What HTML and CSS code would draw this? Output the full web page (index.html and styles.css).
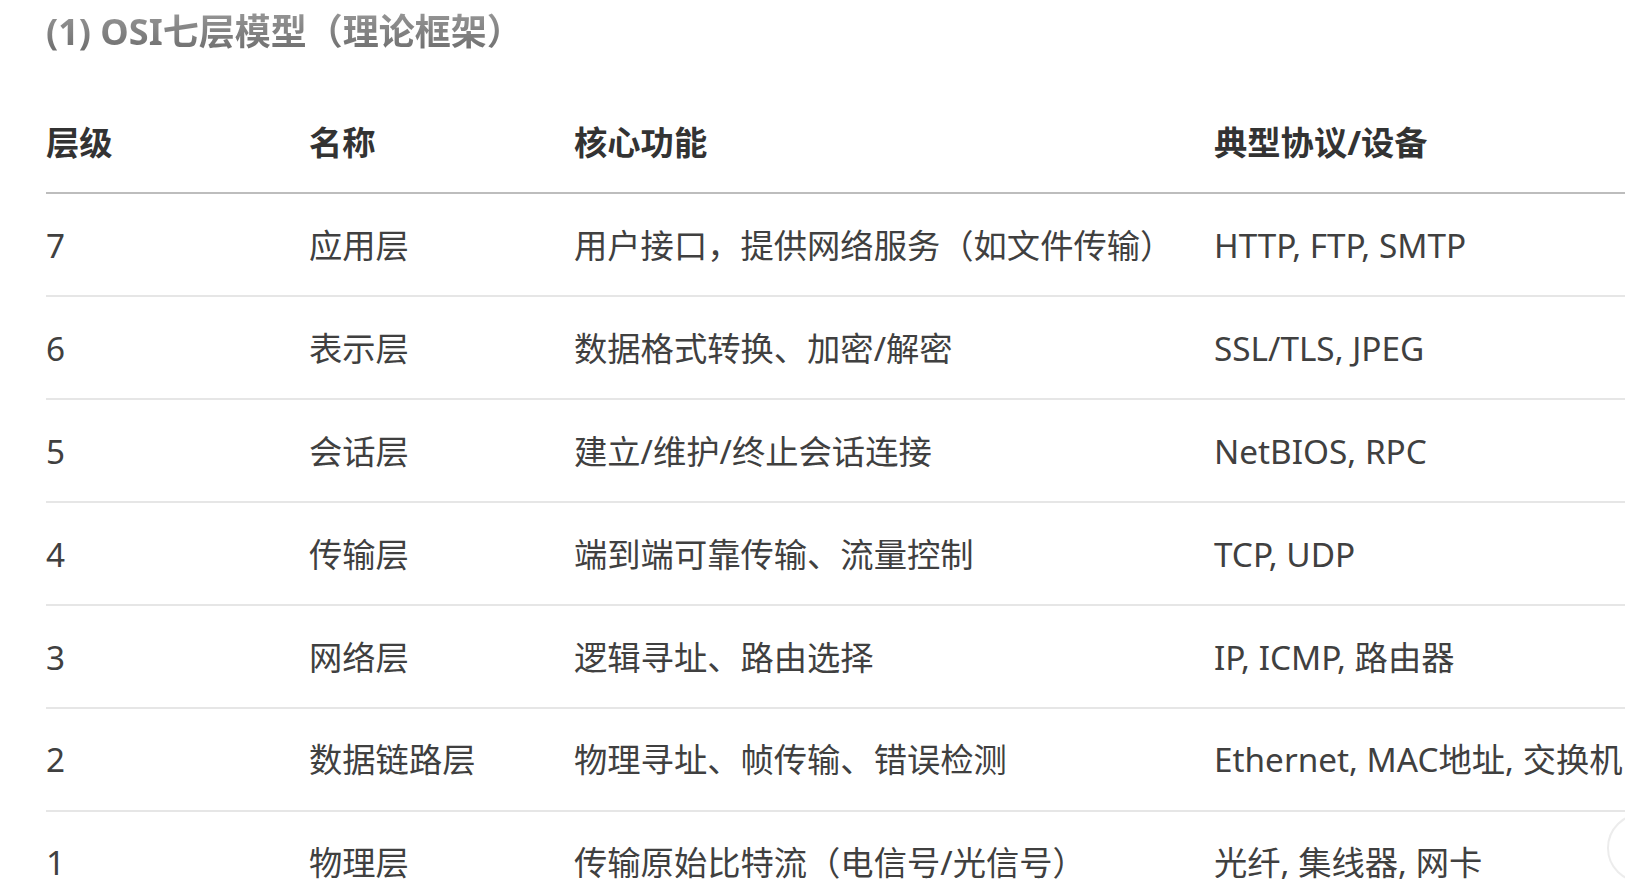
FILE: index.html
```html
<!DOCTYPE html>
<html lang="zh-CN">
<head>
<meta charset="utf-8">
<title>OSI七层模型</title>
<link rel="stylesheet" href="styles.css">
</head>
<body>
<div class="page">
  <h3 class="section-title">(1) OSI七层模型（理论框架）</h3>
  <table class="osi">
    <colgroup>
      <col class="c1"><col class="c2"><col class="c3"><col class="c4">
    </colgroup>
    <thead>
      <tr><th>层级</th><th>名称</th><th>核心功能</th><th>典型协议/设备</th></tr>
    </thead>
    <tbody>
      <tr><td>7</td><td>应用层</td><td>用户接口，提供网络服务（如文件传输）</td><td>HTTP, FTP, SMTP</td></tr>
      <tr><td>6</td><td>表示层</td><td>数据格式转换、加密/解密</td><td>SSL/TLS, JPEG</td></tr>
      <tr><td>5</td><td>会话层</td><td>建立/维护/终止会话连接</td><td>NetBIOS, RPC</td></tr>
      <tr><td>4</td><td>传输层</td><td>端到端可靠传输、流量控制</td><td>TCP, UDP</td></tr>
      <tr><td>3</td><td>网络层</td><td>逻辑寻址、路由选择</td><td>IP, ICMP, 路由器</td></tr>
      <tr><td>2</td><td>数据链路层</td><td>物理寻址、帧传输、错误检测</td><td>Ethernet, MAC地址, 交换机</td></tr>
      <tr><td>1</td><td>物理层</td><td>传输原始比特流（电信号/光信号）</td><td>光纤, 集线器, 网卡</td></tr>
    </tbody>
  </table>
</div>
<div class="float-btn"></div>
</body>
</html>
```

FILE: styles.css
```css
html, body {
  margin: 0;
  padding: 0;
  background: #ffffff;
  overflow: hidden;
}
body {
  font-family: "Noto Sans", "Noto Sans CJK SC", sans-serif;
  color: #3f3f3f;
}
.page {
  padding-left: 46px;
}
.section-title {
  margin: 8px 0 35px 0;
  font-size: 36px;
  line-height: 48px;
  font-weight: 700;
  background: linear-gradient(180deg, #9a9a9a 0%, #6a6a6a 100%);
  -webkit-background-clip: text;
  background-clip: text;
  color: transparent;
  white-space: nowrap;
}
.osi {
  border-collapse: collapse;
  table-layout: fixed;
  width: 1800px;
  font-size: 33.3px;
}
.c1 { width: 263px; }
.c2 { width: 265px; }
.c3 { width: 640px; }
.osi th,
.osi td {
  text-align: left;
  line-height: 54px;
  white-space: nowrap;
  vertical-align: middle;
}
.osi th {
  padding: 23.7px 16px 23.7px 0;
  font-weight: 700;
  color: #333333;
  border-bottom: 2px solid #bdbdbd;
}
.osi td {
  padding: 23.2px 16px 23.8px 0;
  color: #404040;
  border-bottom: 2px solid #e6e6e6;
}
.float-btn {
  position: fixed;
  left: 1607px;
  top: 813px;
  width: 66px;
  height: 66px;
  border-radius: 50%;
  border: 2px solid #ececec;
  background: #ffffff;
}
```
